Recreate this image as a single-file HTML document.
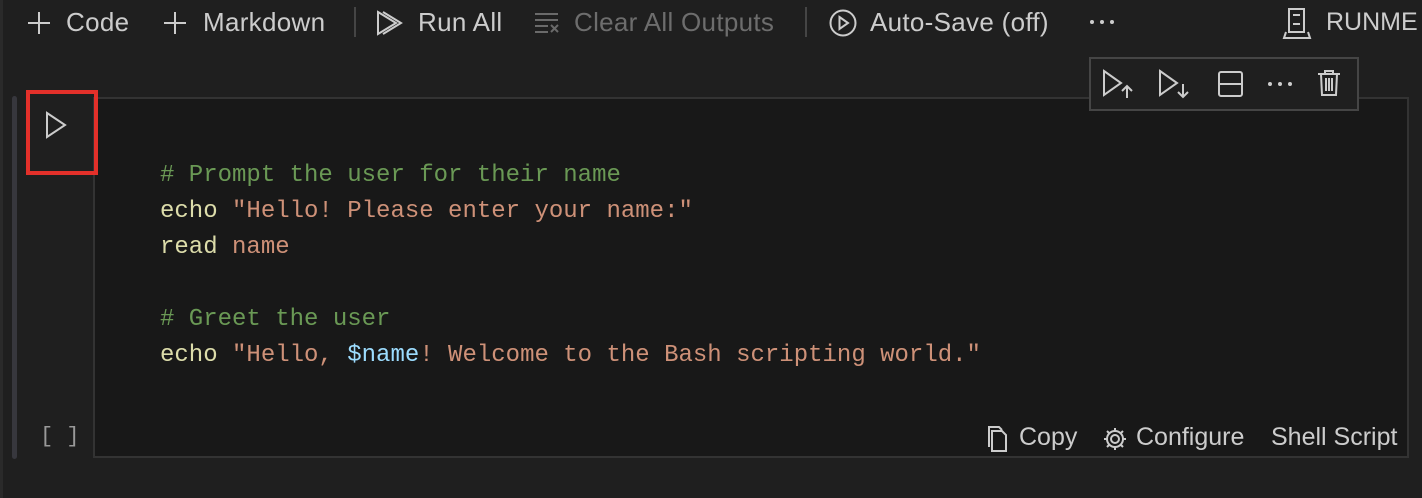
<!DOCTYPE html>
<html><head><style>
html,body{margin:0;padding:0;}
body{width:1422px;height:498px;background:#1f1f1f;position:relative;overflow:hidden;font-family:"Liberation Sans",sans-serif;color:#cccccc;}
.t{position:absolute;top:6px;font-size:26px;line-height:32px;white-space:nowrap;letter-spacing:0.3px;}
.sep{position:absolute;top:7px;width:2px;height:30px;background:#454545;}
svg{position:absolute;}
.cell{position:absolute;left:93px;top:97px;width:1316px;height:361px;background:#181818;border:2px solid #333;box-sizing:border-box;}
.code{position:absolute;left:160px;top:158px;font-family:"Liberation Mono",monospace;font-size:24px;line-height:36px;white-space:pre;color:#d4d4d4;}
.c{color:#6a9955}.k{color:#dcdcaa}.s{color:#ce9178}.v{color:#9cdcfe}
.bar{position:absolute;left:12px;top:96px;width:5px;height:363px;background:#37373d;border-radius:3px;}
.red{position:absolute;left:26px;top:90px;width:72px;height:85px;border:4px solid #e3302a;box-sizing:border-box;}
.tb{position:absolute;left:1089px;top:57px;width:270px;height:54px;background:#1f1f1f;border:2px solid #454545;box-sizing:border-box;}
.f{position:absolute;top:422px;font-size:25px;line-height:30px;color:#cccccc;white-space:nowrap;}
.dot{position:absolute;width:4px;height:4px;border-radius:2px;background:#ccc;}
</style></head><body>
<div style="position:absolute;left:0;top:0;width:3px;height:498px;background:#2a2a2a"></div>
<svg style="left:26px;top:10px" width="26" height="26" viewBox="0 0 26 26"><path d="M13 2V24M2 13H24" stroke="#ccc" stroke-width="2"/></svg>
<div class="t" style="left:66px">Code</div>
<svg style="left:162px;top:10px" width="26" height="26" viewBox="0 0 26 26"><path d="M13 2V24M2 13H24" stroke="#ccc" stroke-width="2"/></svg>
<div class="t" style="left:203px">Markdown</div>
<div class="sep" style="left:354px"></div>
<svg style="left:376px;top:10px" width="30" height="26" viewBox="0 0 30 26"><path d="M2 2L20 13L2 24ZM7 2L25 13L7 24" fill="none" stroke="#ccc" stroke-width="2"/></svg>
<div class="t" style="left:418px">Run All</div>
<svg style="left:534px;top:12px" width="30" height="22" viewBox="0 0 30 22"><path d="M1 2H24M1 8H24M1 14H14M1 20H14M17 13L24 20M24 13L17 20" stroke="#6a6a6a" stroke-width="2"/></svg>
<div class="t" style="left:574px;color:#6d6d6d">Clear All Outputs</div>
<div class="sep" style="left:805px"></div>
<svg style="left:829px;top:9px" width="28" height="28" viewBox="0 0 28 28"><circle cx="14" cy="14" r="12.5" fill="none" stroke="#ccc" stroke-width="2"/><path d="M10.5 8L19 14L10.5 20Z" fill="none" stroke="#ccc" stroke-width="2"/></svg>
<div class="t" style="left:870px">Auto-Save (off)</div>
<div class="dot" style="left:1090px;top:20px"></div><div class="dot" style="left:1100px;top:20px"></div><div class="dot" style="left:1110px;top:20px"></div>
<svg style="left:1282px;top:7px" width="30" height="32" viewBox="0 0 30 32"><path d="M7 2H22V25H7ZM11 8H18M11 17H18M4 25L2 31H28L26 25" fill="none" stroke="#ccc" stroke-width="2"/></svg>
<div class="t" style="left:1326px;letter-spacing:0;font-size:25px">RUNME</div>

<div class="bar"></div>
<div class="cell"></div>
<div class="red"></div>
<svg style="left:44px;top:110px" width="24" height="30" viewBox="0 0 24 30"><path d="M3 3L21 15L3 27Z" fill="none" stroke="#ccc" stroke-width="2"/></svg>
<div style="position:absolute;left:40px;top:424px;font-family:'Liberation Mono',monospace;font-size:22px;color:#999;">[ ]</div>

<div class="tb"></div>
<svg style="left:1100px;top:68px" width="36" height="32" viewBox="0 0 36 32"><path d="M4 3L21 15L4 27Z" fill="none" stroke="#ccc" stroke-width="2"/><path d="M27 30V18M22 23L27 18L32 23" fill="none" stroke="#ccc" stroke-width="2"/></svg>
<svg style="left:1156px;top:68px" width="36" height="32" viewBox="0 0 36 32"><path d="M4 3L21 15L4 27Z" fill="none" stroke="#ccc" stroke-width="2"/><path d="M27 16V29M22 24L27 29L32 24" fill="none" stroke="#ccc" stroke-width="2"/></svg>
<svg style="left:1217px;top:70px" width="28" height="28" viewBox="0 0 28 28"><rect x="2" y="2" width="23" height="24" rx="2" fill="none" stroke="#ccc" stroke-width="2"/><path d="M2 14H25" stroke="#ccc" stroke-width="2"/></svg>
<div class="dot" style="left:1268px;top:82px"></div><div class="dot" style="left:1278px;top:82px"></div><div class="dot" style="left:1288px;top:82px"></div>
<svg style="left:1316px;top:69px" width="26" height="28" viewBox="0 0 26 28"><path d="M2 5H24M9 5V2H17V5M5 5L6 26H20L21 5M10 9V22M13 9V22M16 9V22" fill="none" stroke="#ccc" stroke-width="2"/></svg>

<div class="code"><span class="c"># Prompt the user for their name</span>
<span class="k">echo</span> <span class="s">"Hello! Please enter your name:"</span>
<span class="k">read</span> <span class="s">name</span>

<span class="c"># Greet the user</span>
<span class="k">echo</span> <span class="s">"Hello, </span><span class="v">$name</span><span class="s">! Welcome to the Bash scripting world."</span></div>

<svg style="left:986px;top:425px" width="24" height="28" viewBox="0 0 24 28"><path d="M6 6V26H20V10L16 6ZM3 22V2H13L16 5" fill="none" stroke="#ccc" stroke-width="2"/></svg>
<div class="f" style="left:1019px">Copy</div>
<svg style="left:1102px;top:426px" width="26" height="26" viewBox="0 0 26 26"><circle cx="13" cy="13" r="4" fill="none" stroke="#ccc" stroke-width="2"/><path d="M13 2V6M13 20V24M2 13H6M20 13H24M5 5L8 8M18 18L21 21M5 21L8 18M18 8L21 5" stroke="#ccc" stroke-width="2"/><circle cx="13" cy="13" r="8" fill="none" stroke="#ccc" stroke-width="2"/></svg>
<div class="f" style="left:1136px">Configure</div>
<div class="f" style="left:1271px">Shell Script</div>
</body></html>
